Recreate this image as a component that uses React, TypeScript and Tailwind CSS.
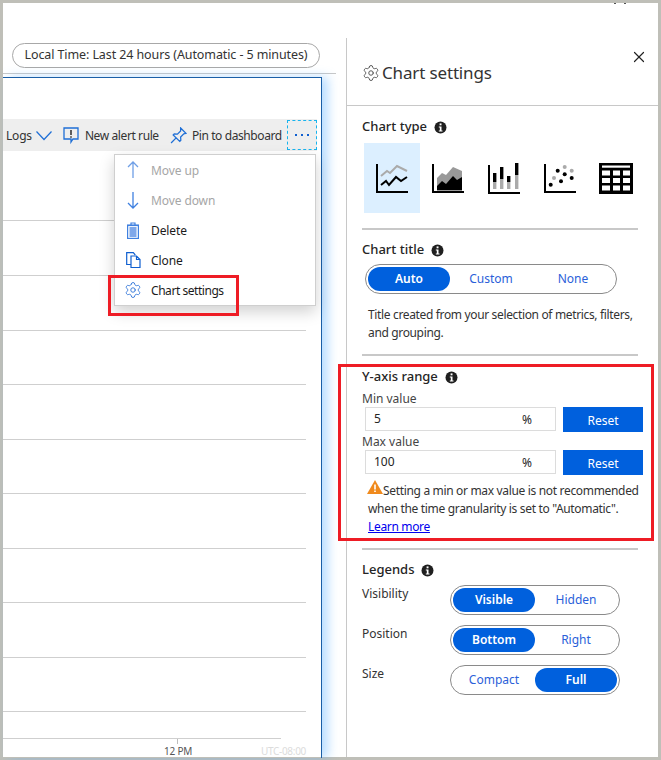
import React from "react";
import { Settings, X } from "lucide-react";

const font = "font-['Noto_Sans',sans-serif]";

function Info() {
  return (
    <svg width="13" height="13" viewBox="0 0 13 13" className="shrink-0">
      <circle cx="6.5" cy="6.5" r="6" fill="#1f1f1f" />
      <rect x="5.6" y="2.4" width="1.9" height="1.9" fill="#fff" />
      <path d="M4.8 5.5h2.7v3.9h1v1.1H4.8V9.4h1V6.6h-1z" fill="#fff" />
    </svg>
  );
}

function Axis() {
  return <path d="M1 0v28h31" fill="none" stroke="#000" strokeWidth="2" />;
}

function LineChartIcon() {
  return (
    <svg width="32" height="30" viewBox="0 -1 32 30">
      <Axis />
      <path d="M5 12l6-5 3 2 7-7 10 5" fill="none" stroke="#aaa" strokeWidth="2" />
      <path d="M5 21l5-4 3 4 7-8 5 4 6-4" fill="none" stroke="#000" strokeWidth="2" />
    </svg>
  );
}
function AreaIcon() {
  return (
    <svg width="32" height="30" viewBox="0 -1 32 30">
      <Axis />
      <path d="M5 14l5-5 4 2 7-8 9 4v20H5z" fill="#999" />
      <path d="M5 22l5-5 4 3 7-8 4 4 5-3v13H5z" fill="#000" />
    </svg>
  );
}
function BarsIcon() {
  const bars = [
    { x: 5, top: 8, mid: 17 },
    { x: 12, top: 2, mid: 14 },
    { x: 19, top: 11, mid: 17 },
    { x: 27, top: -2, mid: 10 },
  ];
  return (
    <svg width="32" height="31" viewBox="0 -2 32 31">
      <Axis />
      {bars.map((b) => (
        <g key={b.x}>
          <rect x={b.x} y={b.top} width="3.4" height={b.mid - b.top} fill="#000" />
          <rect x={b.x} y={b.mid} width="3.4" height={24 - b.mid} fill="#aaa" />
        </g>
      ))}
    </svg>
  );
}
function ScatterIcon() {
  const black = [[6.7, 20.7], [13.7, 6.7], [20.7, 10.3], [17, 17.3], [27.7, 14]];
  const gray = [[10, 14], [20.7, 3], [27.7, 6.7]];
  return (
    <svg width="32" height="30" viewBox="0 -1 32 30">
      <Axis />
      {gray.map(([x, y]) => <circle key={`${x}-${y}`} cx={x} cy={y} r="2" fill="#aaa" />)}
      {black.map(([x, y]) => <circle key={`${x}-${y}`} cx={x} cy={y} r="2" fill="#000" />)}
    </svg>
  );
}
function TableIcon() {
  const cols = [[3, 8], [14, 7], [24, 7]];
  const rows = [7.5, 15, 22.5];
  return (
    <svg width="34" height="31" viewBox="0 0 34 31">
      <rect width="34" height="31" fill="#000" />
      <rect x="3" y="2.5" width="28" height="2.2" fill="#fff" />
      {rows.map((y) => cols.map(([x, w]) => <rect key={`${x}-${y}`} x={x} y={y} width={w} height="5" fill="#fff" />))}
    </svg>
  );
}

function Toggle({ items, active, wide }: { items: string[]; active: number; wide?: boolean }) {
  return (
    <div className={`flex h-[30px] items-center rounded-full border border-[#8a8a8a] bg-white px-[2px] ${wide ? "w-[252px]" : "w-[170px]"}`}>
      {items.map((t, i) => (
        <div
          key={t}
          className={`flex h-[24px] w-[82px] items-center justify-center rounded-full text-[12px] ${i === active ? "bg-[#0060dd] font-semibold text-white" : "text-[#2b5fd9]"}`}
        >
          {t}
        </div>
      ))}
    </div>
  );
}

function SectionTitle({ children }: { children: React.ReactNode }) {
  return (
    <div className="flex h-[20px] items-center gap-[7px] text-[13px] font-medium text-[#252525]">
      {children}
      <Info />
    </div>
  );
}

function Divider() {
  return <div className="h-[2px] w-[276px] bg-[#c8c8c8]" />;
}

function RangeRow({ value }: { value: string }) {
  return (
    <div className="flex items-start pl-[3px]">
      <div className="flex h-[24px] w-[191px] items-center justify-between border border-[#dcdcdc] pl-[8px] pr-[23px] text-[12px] text-[#252525]">
        <span>{value}</span>
        <span className="mt-[2px]">%</span>
      </div>
      <div className="ml-[7px] flex h-[25px] w-[80px] items-center justify-center bg-[#0060dd] pt-[2px] text-[12px] text-white">Reset</div>
    </div>
  );
}

function MenuItem({ icon, label, disabled, tight }: { icon: React.ReactNode; label: string; disabled?: boolean; tight?: boolean }) {
  return (
    <div className={`flex h-[30px] items-center text-[12px] ${disabled ? "text-[#a6a6a6]" : "text-[#1b1b1b]"}`}>
      <span className="flex w-[36px] justify-center">{icon}</span>
      <span className={`pt-[2px] ${tight ? "tracking-[-0.45px]" : "tracking-[-0.1px]"}`}>{label}</span>
    </div>
  );
}

const gridHeights = [70, 55, 55, 54, 55, 54, 55, 54, 55, 54];

export default function App() {
  return (
    <div className={`${font} relative h-[760px] w-[661px] overflow-hidden bg-[#bfbfb8] p-[3px] text-[#252525]`}>
      <div className="flex h-full bg-white">
        {/* left */}
        <div className="flex w-[343px] shrink-0 flex-col">
          <div className="pl-[9px] pt-[40px]">
            <div className="flex h-[25px] w-[308px] items-center justify-center whitespace-nowrap rounded-full border border-[#a8a8a8] text-[12.5px] tracking-[-0.1px] text-[#333]">
              Local Time: Last 24 hours (Automatic - 5 minutes)
            </div>
          </div>
          <div className="mt-[5px] h-px w-[333px] shrink-0 bg-[#c8c8c8]" />
          <div className="relative mt-[3px] w-[319px] flex-1 border-r border-t border-[#1a5ea6] shadow-[6px_0_10px_rgba(80,170,255,0.4)]">
            <div className="mt-[41px] flex h-[32px] w-[314px] items-center whitespace-nowrap bg-[#eeeeee] pt-px text-[12px] text-[#333]">
              <span className="ml-[3px] tracking-[-0.2px]">Logs</span>
              <svg width="16" height="10" viewBox="0 0 16 10" className="ml-[4px]">
                <path d="M.5.5L8 8.5 15.5.5" fill="none" stroke="#1f6fd6" strokeWidth="1.2" />
              </svg>
              <svg width="16" height="18" viewBox="0 0 16 18" className="ml-[11px]">
                <path d="M1 1h14v11H10l-2 3v-3H1z" fill="none" stroke="#1f6fd6" strokeWidth="1.3" />
                <path d="M8 3v5M8 9.3v1.4" stroke="#1f1f1f" strokeWidth="1.4" />
              </svg>
              <span className="ml-[6px] w-[73px] tracking-[-0.4px]">New alert rule</span>
              <svg width="17" height="17" viewBox="0 0 16 16" className="ml-[12px]">
                <path d="M10 1l5 5-2 .5-3 3 .2 3-1 1L3 7.5l1-1 3 .2 3-3zM6 10l-5 5" fill="none" stroke="#1f6fd6" strokeWidth="1.2" />
              </svg>
              <span className="ml-[5px] w-[90px] tracking-[-0.4px]">Pin to dashboard</span>
              <div className="-mt-px ml-[5px] flex h-[30px] w-[30px] items-center justify-center gap-[4px] border border-dashed border-[#18b4ee]">
                <span className="h-[2px] w-[2px] bg-[#0f5fd0]" />
                <span className="h-[2px] w-[2px] bg-[#0f5fd0]" />
                <span className="h-[2px] w-[2px] bg-[#0f5fd0]" />
              </div>
            </div>

            {gridHeights.map((h, i) => (
              <div key={i} className="w-[303px] border-b border-[#cfcfcf]" style={{ height: h }} />
            ))}

            <div className="mt-[26px] h-px w-[278px] bg-[#cfcfcf]" />
            <div className="ml-[174px] h-[5px] w-px bg-[#bdbdbd]" />
            <div className="relative flex h-[14px] w-[303px] items-center pt-px text-[10px]">
              <span className="ml-[161px] tracking-[-0.2px] text-[#555]">12 PM</span>
              <span className="ml-auto tracking-[-0.3px] text-[#dcdcdc]">UTC-08:00</span>
            </div>

            {/* dropdown */}
            <div className="absolute left-[111px] top-[76px] w-[202px] border border-[#cfcfcf] bg-white shadow-[0_6px_14px_rgba(0,0,0,0.18)]">
              <MenuItem
                disabled
                label="Move up"
                icon={
                  <svg width="12" height="18" viewBox="0 0 12 18">
                    <path d="M6 17V1M1 6l5-5 5 5" fill="none" stroke="#6f9fe6" strokeWidth="1.3" />
                  </svg>
                }
              />
              <MenuItem
                disabled
                label="Move down"
                icon={
                  <svg width="12" height="18" viewBox="0 0 12 18">
                    <path d="M6 1v16M1 12l5 5 5-5" fill="none" stroke="#3f80e0" strokeWidth="1.3" />
                  </svg>
                }
              />
              <MenuItem
                label="Delete"
                icon={
                  <svg width="14" height="17" viewBox="0 0 14 17">
                    <path d="M1 3h12M5 3V1h4v2" fill="none" stroke="#3f80e0" strokeWidth="1.2" />
                    <rect x="1.6" y="3.5" width="10.8" height="12.9" fill="none" stroke="#3f80e0" strokeWidth="1.2" />
                    <rect x="3.5" y="5" width="7" height="10" fill="#7fa8ea" />
                  </svg>
                }
              />
              <MenuItem
                label="Clone"
                icon={
                  <svg width="15" height="16" viewBox="0 0 15 16">
                    <path d="M5 12.5H.7V.7h6.6l2 2.3" fill="none" stroke="#0f5fd0" strokeWidth="1.2" />
                    <path d="M5 4h5.5L14 7.5v8H5zM10.5 4v3.5H14" fill="none" stroke="#0f5fd0" strokeWidth="1.2" />
                  </svg>
                }
              />
              <MenuItem tight label="Chart settings" icon={<Settings size={18} strokeWidth={1.2} color="#2f74d8" />} />
            </div>
            <div className="absolute left-[105px] top-[197px] h-[41px] w-[131px] border-[3px] border-[#ee1c25]" />
          </div>
        </div>

        {/* right panel */}
        <div className="mt-[35px] flex-1 border-l border-[#c8c8c8]">
          <div className="relative flex h-[68px] items-start border-b border-[#c8c8c8] pl-[15px] pt-[21px]">
            <div className="flex items-center gap-[2px] text-[17px] leading-[28px] tracking-[-0.15px] text-[#333]">
              <Settings size={18} strokeWidth={1.3} color="#555" />
              Chart settings
            </div>
            <X size={18} strokeWidth={1.6} color="#222" className="absolute right-[10px] top-[10px]" />
          </div>

          <div className="pl-[15px]">
            <div className="pt-[11px]"><SectionTitle>Chart type</SectionTitle></div>
            <div className="mt-[6px] flex pl-[2px]">
              <div className="flex h-[70px] w-[56px] items-center justify-center bg-[#dcefff]"><LineChartIcon /></div>
              <div className="flex h-[70px] w-[56px] items-center justify-center"><AreaIcon /></div>
              <div className="flex h-[70px] w-[56px] items-center justify-center"><BarsIcon /></div>
              <div className="flex h-[70px] w-[56px] items-center justify-center"><ScatterIcon /></div>
              <div className="flex h-[70px] w-[56px] items-center justify-center"><TableIcon /></div>
            </div>
            <div className="mt-[15px]"><Divider /></div>

            <div className="mt-[10px]"><SectionTitle>Chart title</SectionTitle></div>
            <div className="mt-[4px] pl-[3px]"><Toggle wide items={["Auto", "Custom", "None"]} active={0} /></div>
            <div className="mt-[12px] w-[280px] pl-[6px] text-[12px] leading-[18px] tracking-[-0.35px] text-[#333]">
              Title created from your selection of metrics, filters, and grouping.
            </div>
            <div className="mt-[12px]"><Divider /></div>

            <div className="mt-[11px]"><SectionTitle>Y-axis range</SectionTitle></div>
            <div className="mt-[3px] h-[17px] text-[12px] leading-[17px] text-[#444]">Min value</div>
            <RangeRow value="5" />
            <div className="mt-[1px] h-[17px] text-[12px] leading-[17px] text-[#444]">Max value</div>
            <RangeRow value="100" />
            <div className="mt-[5px] whitespace-nowrap pl-[6px] text-[12px] leading-[18px] tracking-[-0.33px] text-[#333]">
              <svg width="16" height="14" viewBox="0 0 16 14" className="-ml-px inline-block align-[1px]">
                <path d="M8 0l8 14H0z" fill="#f08a1d" />
                <path d="M7.2 4.5h1.6v5H7.2zM7.2 10.5h1.6V12H7.2z" fill="#fff" />
              </svg>
              Setting a min or max value is not recommended
              <br />
              when the time granularity is set to "Automatic".
              <br />
              <span className="text-[#0000ee] underline">Learn more</span>
            </div>
            <div className="mt-[12px]"><Divider /></div>

            <div className="mt-[10px]"><SectionTitle>Legends</SectionTitle></div>
            <div className="mt-[5px] flex flex-col gap-[10px]">
              {[
                { label: "Visibility", items: ["Visible", "Hidden"], active: 0 },
                { label: "Position", items: ["Bottom", "Right"], active: 0 },
                { label: "Size", items: ["Compact", "Full"], active: 1 },
              ].map((r) => (
                <div key={r.label} className="flex items-start text-[12px] text-[#333]">
                  <span className="w-[88px] pt-px leading-[16px]">{r.label}</span>
                  <Toggle items={r.items} active={r.active} />
                </div>
              ))}
            </div>
          </div>
        </div>
      </div>

      {/* annotation over the Y-axis section */}
      <div className="absolute left-[338px] top-[364px] h-[177px] w-[316px] border-[3px] border-[#ee1c25]" />
      <div className="absolute left-[614px] top-[3px] h-px w-[2px] bg-[#555]" />
      <div className="absolute left-[624px] top-[3px] h-px w-[2px] bg-[#555]" />
    </div>
  );
}
